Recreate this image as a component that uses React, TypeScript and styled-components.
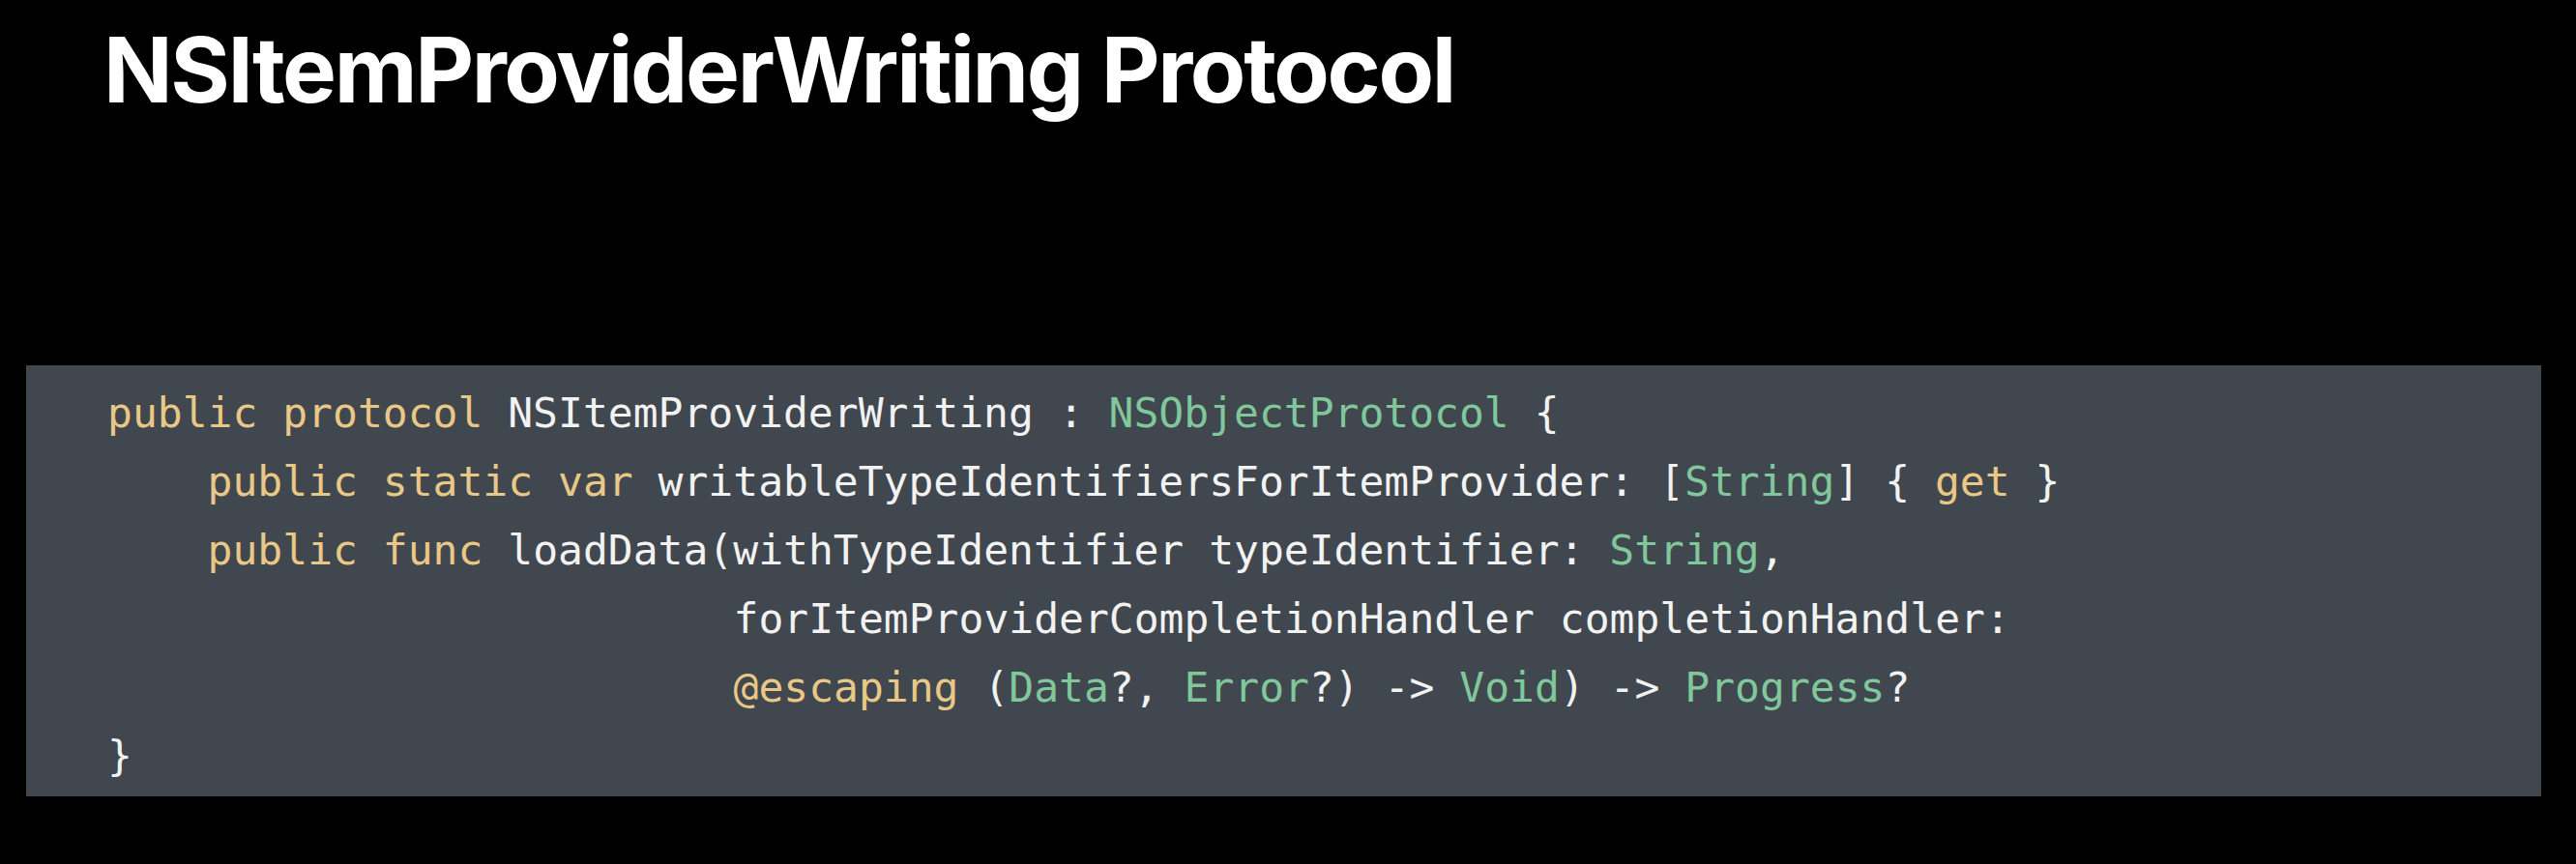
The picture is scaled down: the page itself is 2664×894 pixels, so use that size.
import React from "react";
import styled, { createGlobalStyle } from "styled-components";

const Global = createGlobalStyle`
  html, body {
    margin: 0;
    padding: 0;
    background: #000;
  }
  body {
    width: 2664px;
    height: 894px;
    overflow: hidden;
  }
`;

const Slide = styled.main`
  display: flex;
  flex-direction: column;
  width: 2664px;
  height: 894px;
  background: #000;
`;

const Title = styled.h1`
  margin: 25px 0 0 107px;
  font-family: Inter, "Liberation Sans", sans-serif;
  font-weight: 700;
  font-size: 94px;
  line-height: 94px;
  letter-spacing: -2.35px;
  color: #fff;
`;

const CodeBox = styled.pre`
  margin: 259px 0 0 27px;
  width: 2601px;
  height: 446px;
  box-sizing: border-box;
  padding: 14px 0 0 84px;
  background: #41474f;
  font-family: "DejaVu Sans Mono", "Liberation Mono", monospace;
  font-size: 43px;
  line-height: 71px;
  color: #f2f2f2;
  white-space: pre;
`;

const Line = styled.div<{ $indent: number }>`
  padding-left: ${(p) => p.$indent * 25.9}px;
  height: 71px;
`;

const Kw = styled.span`
  color: #e9c887;
`;

const Ty = styled.span`
  color: #80c79b;
`;

type Tok = [string, "k" | "t" | "p"];

const lines: { indent: number; toks: Tok[] }[] = [
  {
    indent: 0,
    toks: [
      ["public protocol", "k"],
      [" NSItemProviderWriting : ", "p"],
      ["NSObjectProtocol", "t"],
      [" {", "p"],
    ],
  },
  {
    indent: 4,
    toks: [
      ["public static var", "k"],
      [" writableTypeIdentifiersForItemProvider: [", "p"],
      ["String", "t"],
      ["] { ", "p"],
      ["get", "k"],
      [" }", "p"],
    ],
  },
  {
    indent: 4,
    toks: [
      ["public func", "k"],
      [" loadData(withTypeIdentifier typeIdentifier: ", "p"],
      ["String", "t"],
      [",", "p"],
    ],
  },
  {
    indent: 25,
    toks: [["forItemProviderCompletionHandler completionHandler:", "p"]],
  },
  {
    indent: 25,
    toks: [
      ["@escaping", "k"],
      [" (", "p"],
      ["Data", "t"],
      ["?, ", "p"],
      ["Error", "t"],
      ["?) -> ", "p"],
      ["Void", "t"],
      [") -> ", "p"],
      ["Progress", "t"],
      ["?", "p"],
    ],
  },
  { indent: 0, toks: [["}", "p"]] },
];

export default function App() {
  return (
    <>
      <Global />
      <Slide>
        <Title>NSItemProviderWriting Protocol</Title>
        <CodeBox>
          {lines.map((l, i) => (
            <Line key={i} $indent={l.indent}>
              {l.toks.map(([text, kind], j) =>
                kind === "k" ? (
                  <Kw key={j}>{text}</Kw>
                ) : kind === "t" ? (
                  <Ty key={j}>{text}</Ty>
                ) : (
                  <span key={j}>{text}</span>
                )
              )}
            </Line>
          ))}
        </CodeBox>
      </Slide>
    </>
  );
}
